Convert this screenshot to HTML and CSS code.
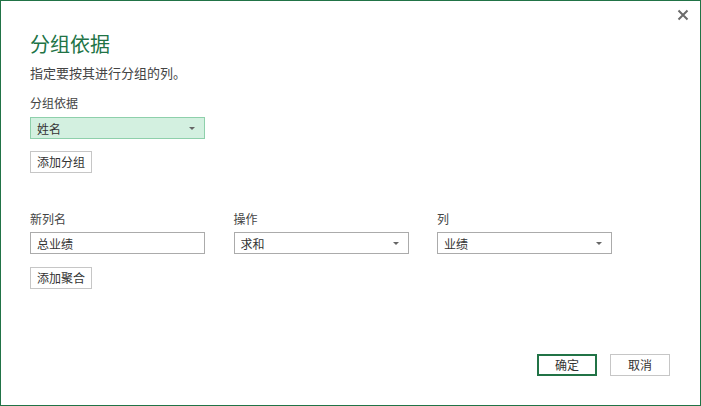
FILE: index.html
```html
<!DOCTYPE html>
<html lang="zh-CN">
<head>
<meta charset="utf-8">
<title>分组依据</title>
<link rel="stylesheet" href="styles.css">
</head>
<body>
<div class="dialog">
  <button class="close" aria-label="关闭">
    <svg width="12" height="12" viewBox="0 0 12 12"><path d="M1.5 1.5 L10.5 10.5 M10.5 1.5 L1.5 10.5" stroke="#6b6b6b" stroke-width="2" fill="none"/></svg>
  </button>
  <h1 class="title">分组依据</h1>
  <p class="subtitle">指定要按其进行分组的列。</p>
  <div class="label first">分组依据</div>
  <div class="select selected"><span>姓名</span><i class="arrow"></i></div>
  <button class="btn add">添加分组</button>

  <div class="grid">
    <div class="label">新列名</div>
    <div class="label">操作</div>
    <div class="label">列</div>
    <div class="input"><span>总业绩</span></div>
    <div class="select"><span>求和</span><i class="arrow"></i></div>
    <div class="select"><span>业绩</span><i class="arrow"></i></div>
  </div>
  <button class="btn add">添加聚合</button>

  <div class="footer">
    <button class="btn primary">确定</button>
    <button class="btn">取消</button>
  </div>
</div>
</body>
</html>
```
FILE: styles.css
```css
* { box-sizing: border-box; }
html, body { margin: 0; padding: 0; background: #fff; }
body {
  font-family: "Noto Sans CJK SC", "Noto Sans", "Liberation Sans", sans-serif;
  color: #444;
  font-size: 12px;
}
.dialog {
  position: relative;
  width: 701px;
  height: 406px;
  border: 1px solid #217346;
  padding: 30px 29px 0 29px;
  display: flex;
  flex-direction: column;
  align-items: flex-start;
}
.close {
  position: absolute;
  top: 7px;
  right: 10px;
  width: 14px;
  height: 14px;
  padding: 1px;
  border: 0;
  background: transparent;
  display: flex;
}
.title {
  margin: 0;
  font-size: 20px;
  line-height: 26px;
  font-weight: normal;
  color: #217346;
}
.subtitle {
  margin: 8px 0 0 0;
  font-size: 13px;
  line-height: 16px;
  color: #444;
}
.label {
  font-size: 12px;
  line-height: 16px;
  color: #444;
}
.label.first { margin-top: 14px; }
.select, .input {
  width: 175px;
  height: 22px;
  border: 1px solid #ababab;
  background: #fff;
  display: flex;
  align-items: center;
  justify-content: space-between;
  padding: 0 9px 0 6px;
  font-size: 12px;
  color: #333;
}
.first + .select { margin-top: 6px; }
.select.selected {
  background: #d3f0e0;
  border-color: #8ed0ab;
}
.arrow {
  width: 0;
  height: 0;
  border-left: 3px solid transparent;
  border-right: 3px solid transparent;
  border-top: 3px solid #666;
  margin-top: 1px;
}
.btn {
  font-family: inherit;
  font-size: 12px;
  color: #333;
  background: #fff;
  border: 1px solid #c6c6c6;
  width: 62px;
  height: 22px;
  padding: 0;
  line-height: 20px;
}
.add { margin-top: 12px; }
.grid {
  margin-top: 38px;
  display: grid;
  grid-template-columns: 175px 175px 175px;
  column-gap: 28.5px;
  row-gap: 5px;
}
.grid + .add { margin-top: 13px; }
.footer {
  align-self: flex-end;
  margin-top: 65px;
  margin-right: 1px;
  display: flex;
  gap: 13px;
}
.footer .btn { width: 60px; }
.btn.primary {
  border: 2px solid #217346;
  line-height: 18px;
}
```
